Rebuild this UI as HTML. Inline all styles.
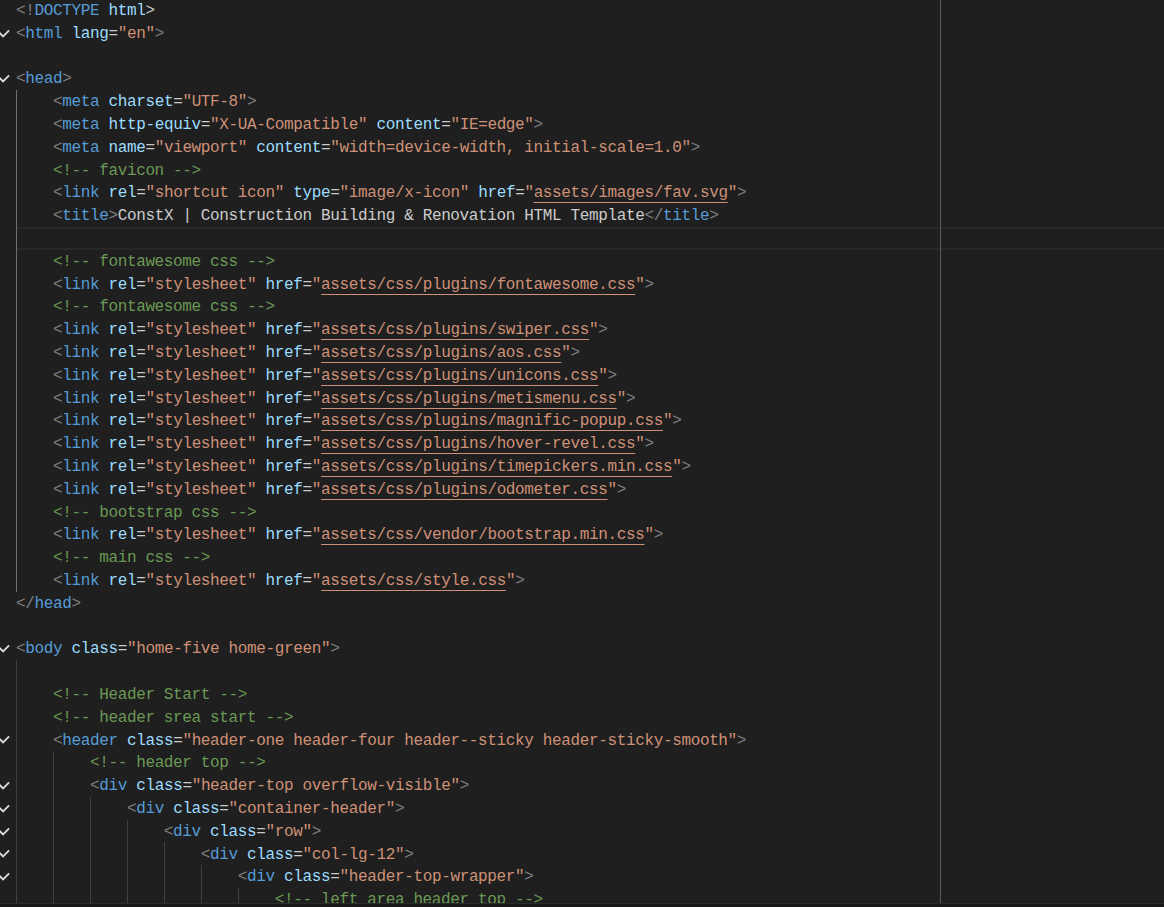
<!DOCTYPE html>
<html><head><meta charset="utf-8"><style>
html,body{margin:0;padding:0;}
body{width:1164px;height:907px;overflow:hidden;background:#1f1f1f;position:relative;font-family:"Liberation Mono",monospace;}
.hl{position:absolute;left:17px;right:0;top:227.00px;height:23.00px;border-top:2px solid #282828;border-bottom:2px solid #282828;box-sizing:border-box;}
.l{position:absolute;left:16px;height:22.8px;line-height:22.8px;font-size:16px;letter-spacing:-0.3605px;white-space:pre;color:#cccccc;}
.p{color:#808080}.t{color:#569cd6}.a{color:#9cdcfe}.e{color:#cccccc}.s{color:#ce9178}.c{color:#6a9955}.x{color:#cccccc}
u{text-decoration:underline;text-underline-offset:5px;text-decoration-thickness:1.2px}
.g{position:absolute;width:1px;background:#404040;}.ga{background:#707070;}
.ruler{position:absolute;left:940px;top:0;width:1.2px;height:903px;background:#5a5a5a;}
.f{position:absolute;left:0;}
.bot{position:absolute;left:0;right:0;top:903px;height:4px;background:#181818;border-top:1px solid #2b2b2b;box-sizing:border-box;}
</style></head><body>
<div class="hl"></div>
<div class="g ga" style="left:16px;top:90.00px;height:501.60px"></div>
<div class="g" style="left:16px;top:660.00px;height:250.80px"></div>
<div class="g" style="left:53px;top:751.20px;height:159.60px"></div>
<div class="g" style="left:90px;top:796.80px;height:114.00px"></div>
<div class="g" style="left:127px;top:819.60px;height:91.20px"></div>
<div class="g" style="left:164px;top:842.40px;height:68.40px"></div>
<div class="g" style="left:201px;top:865.20px;height:45.60px"></div>
<div class="g" style="left:238px;top:888.00px;height:22.80px"></div>
<div class="l" style="top:0.00px"><span class="p">&lt;!</span><span class="t">DOCTYPE</span> <span class="a">html</span><span class="x">&gt;</span></div>
<div class="l" style="top:22.80px"><span class="p">&lt;</span><span class="t">html</span> <span class="a">lang</span><span class="e">=</span><span class="s">"en"</span><span class="p">&gt;</span></div>
<div class="l" style="top:45.60px"></div>
<div class="l" style="top:68.40px"><span class="p">&lt;</span><span class="t">head</span><span class="p">&gt;</span></div>
<div class="l" style="top:91.20px">    <span class="p">&lt;</span><span class="t">meta</span> <span class="a">charset</span><span class="e">=</span><span class="s">"UTF-8"</span><span class="p">&gt;</span></div>
<div class="l" style="top:114.00px">    <span class="p">&lt;</span><span class="t">meta</span> <span class="a">http-equiv</span><span class="e">=</span><span class="s">"X-UA-Compatible"</span> <span class="a">content</span><span class="e">=</span><span class="s">"IE=edge"</span><span class="p">&gt;</span></div>
<div class="l" style="top:136.80px">    <span class="p">&lt;</span><span class="t">meta</span> <span class="a">name</span><span class="e">=</span><span class="s">"viewport"</span> <span class="a">content</span><span class="e">=</span><span class="s">"width=device-width, initial-scale=1.0"</span><span class="p">&gt;</span></div>
<div class="l" style="top:159.60px">    <span class="c">&lt;!-- favicon --&gt;</span></div>
<div class="l" style="top:182.40px">    <span class="p">&lt;</span><span class="t">link</span> <span class="a">rel</span><span class="e">=</span><span class="s">"shortcut icon"</span> <span class="a">type</span><span class="e">=</span><span class="s">"image/x-icon"</span> <span class="a">href</span><span class="e">=</span><span class="s">"<u>assets/images/fav.svg</u>"</span><span class="p">&gt;</span></div>
<div class="l" style="top:205.20px">    <span class="p">&lt;</span><span class="t">title</span><span class="p">&gt;</span><span class="x">ConstX | Construction Building &amp; Renovation HTML Template</span><span class="p">&lt;/</span><span class="t">title</span><span class="p">&gt;</span></div>
<div class="l" style="top:228.00px"></div>
<div class="l" style="top:250.80px">    <span class="c">&lt;!-- fontawesome css --&gt;</span></div>
<div class="l" style="top:273.60px">    <span class="p">&lt;</span><span class="t">link</span> <span class="a">rel</span><span class="e">=</span><span class="s">"stylesheet"</span> <span class="a">href</span><span class="e">=</span><span class="s">"<u>assets/css/plugins/fontawesome.css</u>"</span><span class="p">&gt;</span></div>
<div class="l" style="top:296.40px">    <span class="c">&lt;!-- fontawesome css --&gt;</span></div>
<div class="l" style="top:319.20px">    <span class="p">&lt;</span><span class="t">link</span> <span class="a">rel</span><span class="e">=</span><span class="s">"stylesheet"</span> <span class="a">href</span><span class="e">=</span><span class="s">"<u>assets/css/plugins/swiper.css</u>"</span><span class="p">&gt;</span></div>
<div class="l" style="top:342.00px">    <span class="p">&lt;</span><span class="t">link</span> <span class="a">rel</span><span class="e">=</span><span class="s">"stylesheet"</span> <span class="a">href</span><span class="e">=</span><span class="s">"<u>assets/css/plugins/aos.css</u>"</span><span class="p">&gt;</span></div>
<div class="l" style="top:364.80px">    <span class="p">&lt;</span><span class="t">link</span> <span class="a">rel</span><span class="e">=</span><span class="s">"stylesheet"</span> <span class="a">href</span><span class="e">=</span><span class="s">"<u>assets/css/plugins/unicons.css</u>"</span><span class="p">&gt;</span></div>
<div class="l" style="top:387.60px">    <span class="p">&lt;</span><span class="t">link</span> <span class="a">rel</span><span class="e">=</span><span class="s">"stylesheet"</span> <span class="a">href</span><span class="e">=</span><span class="s">"<u>assets/css/plugins/metismenu.css</u>"</span><span class="p">&gt;</span></div>
<div class="l" style="top:410.40px">    <span class="p">&lt;</span><span class="t">link</span> <span class="a">rel</span><span class="e">=</span><span class="s">"stylesheet"</span> <span class="a">href</span><span class="e">=</span><span class="s">"<u>assets/css/plugins/magnific-popup.css</u>"</span><span class="p">&gt;</span></div>
<div class="l" style="top:433.20px">    <span class="p">&lt;</span><span class="t">link</span> <span class="a">rel</span><span class="e">=</span><span class="s">"stylesheet"</span> <span class="a">href</span><span class="e">=</span><span class="s">"<u>assets/css/plugins/hover-revel.css</u>"</span><span class="p">&gt;</span></div>
<div class="l" style="top:456.00px">    <span class="p">&lt;</span><span class="t">link</span> <span class="a">rel</span><span class="e">=</span><span class="s">"stylesheet"</span> <span class="a">href</span><span class="e">=</span><span class="s">"<u>assets/css/plugins/timepickers.min.css</u>"</span><span class="p">&gt;</span></div>
<div class="l" style="top:478.80px">    <span class="p">&lt;</span><span class="t">link</span> <span class="a">rel</span><span class="e">=</span><span class="s">"stylesheet"</span> <span class="a">href</span><span class="e">=</span><span class="s">"<u>assets/css/plugins/odometer.css</u>"</span><span class="p">&gt;</span></div>
<div class="l" style="top:501.60px">    <span class="c">&lt;!-- bootstrap css --&gt;</span></div>
<div class="l" style="top:524.40px">    <span class="p">&lt;</span><span class="t">link</span> <span class="a">rel</span><span class="e">=</span><span class="s">"stylesheet"</span> <span class="a">href</span><span class="e">=</span><span class="s">"<u>assets/css/vendor/bootstrap.min.css</u>"</span><span class="p">&gt;</span></div>
<div class="l" style="top:547.20px">    <span class="c">&lt;!-- main css --&gt;</span></div>
<div class="l" style="top:570.00px">    <span class="p">&lt;</span><span class="t">link</span> <span class="a">rel</span><span class="e">=</span><span class="s">"stylesheet"</span> <span class="a">href</span><span class="e">=</span><span class="s">"<u>assets/css/style.css</u>"</span><span class="p">&gt;</span></div>
<div class="l" style="top:592.80px"><span class="p">&lt;/</span><span class="t">head</span><span class="p">&gt;</span></div>
<div class="l" style="top:615.60px"></div>
<div class="l" style="top:638.40px"><span class="p">&lt;</span><span class="t">body</span> <span class="a">class</span><span class="e">=</span><span class="s">"home-five home-green"</span><span class="p">&gt;</span></div>
<div class="l" style="top:661.20px"></div>
<div class="l" style="top:684.00px">    <span class="c">&lt;!-- Header Start --&gt;</span></div>
<div class="l" style="top:706.80px">    <span class="c">&lt;!-- header srea start --&gt;</span></div>
<div class="l" style="top:729.60px">    <span class="p">&lt;</span><span class="t">header</span> <span class="a">class</span><span class="e">=</span><span class="s">"header-one header-four header--sticky header-sticky-smooth"</span><span class="p">&gt;</span></div>
<div class="l" style="top:752.40px">        <span class="c">&lt;!-- header top --&gt;</span></div>
<div class="l" style="top:775.20px">        <span class="p">&lt;</span><span class="t">div</span> <span class="a">class</span><span class="e">=</span><span class="s">"header-top overflow-visible"</span><span class="p">&gt;</span></div>
<div class="l" style="top:798.00px">            <span class="p">&lt;</span><span class="t">div</span> <span class="a">class</span><span class="e">=</span><span class="s">"container-header"</span><span class="p">&gt;</span></div>
<div class="l" style="top:820.80px">                <span class="p">&lt;</span><span class="t">div</span> <span class="a">class</span><span class="e">=</span><span class="s">"row"</span><span class="p">&gt;</span></div>
<div class="l" style="top:843.60px">                    <span class="p">&lt;</span><span class="t">div</span> <span class="a">class</span><span class="e">=</span><span class="s">"col-lg-12"</span><span class="p">&gt;</span></div>
<div class="l" style="top:866.40px">                        <span class="p">&lt;</span><span class="t">div</span> <span class="a">class</span><span class="e">=</span><span class="s">"header-top-wrapper"</span><span class="p">&gt;</span></div>
<div class="l" style="top:889.20px">                            <span class="c">&lt;!-- left area header top --&gt;</span></div>
<svg class="f" style="top:27.60px" width="12" height="12" viewBox="0 0 12 12"><path d="M-3 2.4 L3.1 8.5 L9.1 2.4" fill="none" stroke="#d8d8d8" stroke-width="1.9"/></svg>
<svg class="f" style="top:73.20px" width="12" height="12" viewBox="0 0 12 12"><path d="M-3 2.4 L3.1 8.5 L9.1 2.4" fill="none" stroke="#d8d8d8" stroke-width="1.9"/></svg>
<svg class="f" style="top:643.20px" width="12" height="12" viewBox="0 0 12 12"><path d="M-3 2.4 L3.1 8.5 L9.1 2.4" fill="none" stroke="#d8d8d8" stroke-width="1.9"/></svg>
<svg class="f" style="top:734.40px" width="12" height="12" viewBox="0 0 12 12"><path d="M-3 2.4 L3.1 8.5 L9.1 2.4" fill="none" stroke="#d8d8d8" stroke-width="1.9"/></svg>
<svg class="f" style="top:780.00px" width="12" height="12" viewBox="0 0 12 12"><path d="M-3 2.4 L3.1 8.5 L9.1 2.4" fill="none" stroke="#d8d8d8" stroke-width="1.9"/></svg>
<svg class="f" style="top:802.80px" width="12" height="12" viewBox="0 0 12 12"><path d="M-3 2.4 L3.1 8.5 L9.1 2.4" fill="none" stroke="#d8d8d8" stroke-width="1.9"/></svg>
<svg class="f" style="top:825.60px" width="12" height="12" viewBox="0 0 12 12"><path d="M-3 2.4 L3.1 8.5 L9.1 2.4" fill="none" stroke="#d8d8d8" stroke-width="1.9"/></svg>
<svg class="f" style="top:848.40px" width="12" height="12" viewBox="0 0 12 12"><path d="M-3 2.4 L3.1 8.5 L9.1 2.4" fill="none" stroke="#d8d8d8" stroke-width="1.9"/></svg>
<svg class="f" style="top:871.20px" width="12" height="12" viewBox="0 0 12 12"><path d="M-3 2.4 L3.1 8.5 L9.1 2.4" fill="none" stroke="#d8d8d8" stroke-width="1.9"/></svg>
<div class="ruler"></div>
<div class="bot"></div>
</body></html>
